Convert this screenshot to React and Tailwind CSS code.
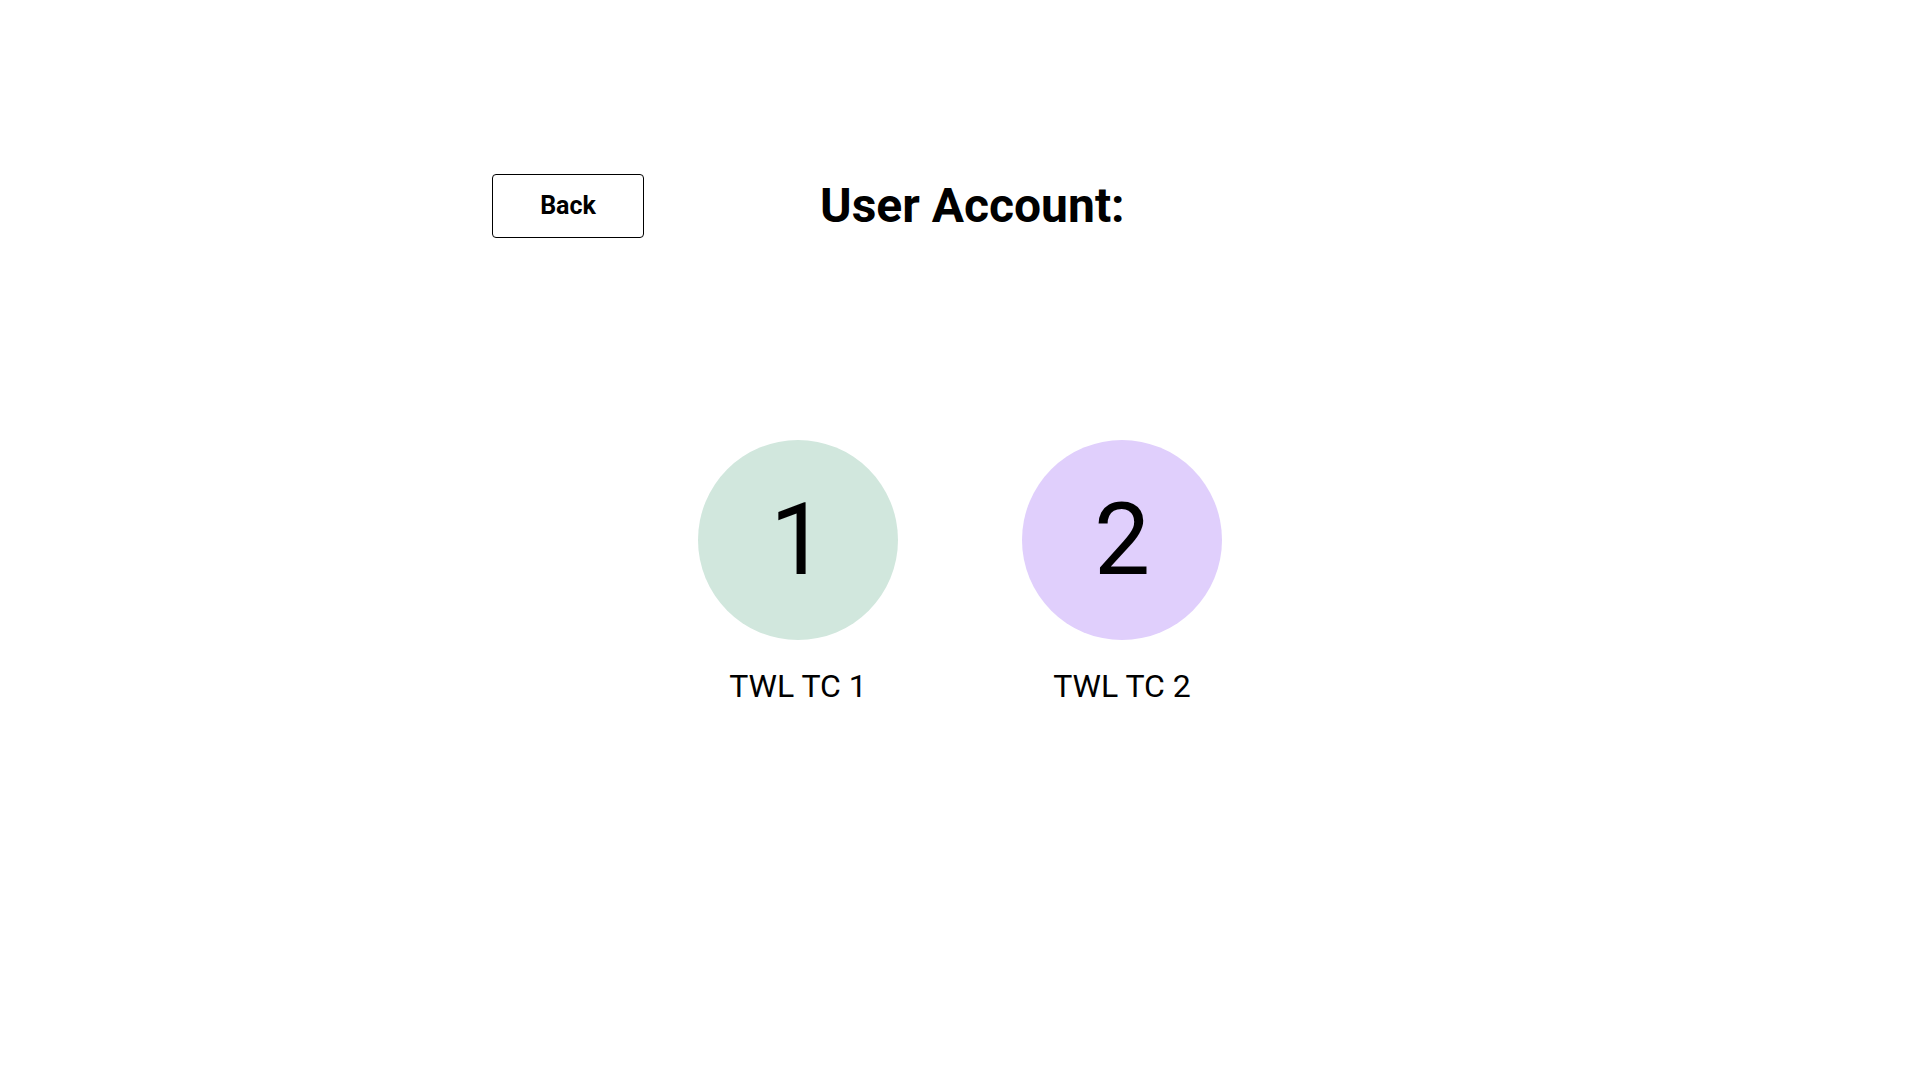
export default function App() {
  const accounts = [
    { n: "1", label: "TWL TC 1", bg: "bg-[#d1e7dd]" },
    { n: "2", label: "TWL TC 2", bg: "bg-[#e0cffc]" },
  ];
  return (
    <div className="min-h-screen w-full bg-white text-black font-['Roboto',sans-serif]">
      <div className="pt-[174px] w-[936px] mx-auto flex items-center">
        <button className="w-[152px] h-[64px] border border-black rounded-[4px] bg-white text-[25px] font-bold flex items-center justify-center">
          Back
        </button>
        <h1 className="ml-[176px] text-[48px] font-bold leading-[56px]">User Account:</h1>
      </div>
      <div className="mt-[202px] flex justify-center gap-[124px]">
        {accounts.map((a) => (
          <div key={a.n} className="flex flex-col items-center w-[200px]">
            <div className={`w-[200px] h-[200px] rounded-full ${a.bg} flex items-center justify-center text-[100px] leading-none`}>
              {a.n}
            </div>
            <div className="mt-[22px] text-[32px] leading-[48px] whitespace-nowrap">{a.label}</div>
          </div>
        ))}
      </div>
    </div>
  );
}
